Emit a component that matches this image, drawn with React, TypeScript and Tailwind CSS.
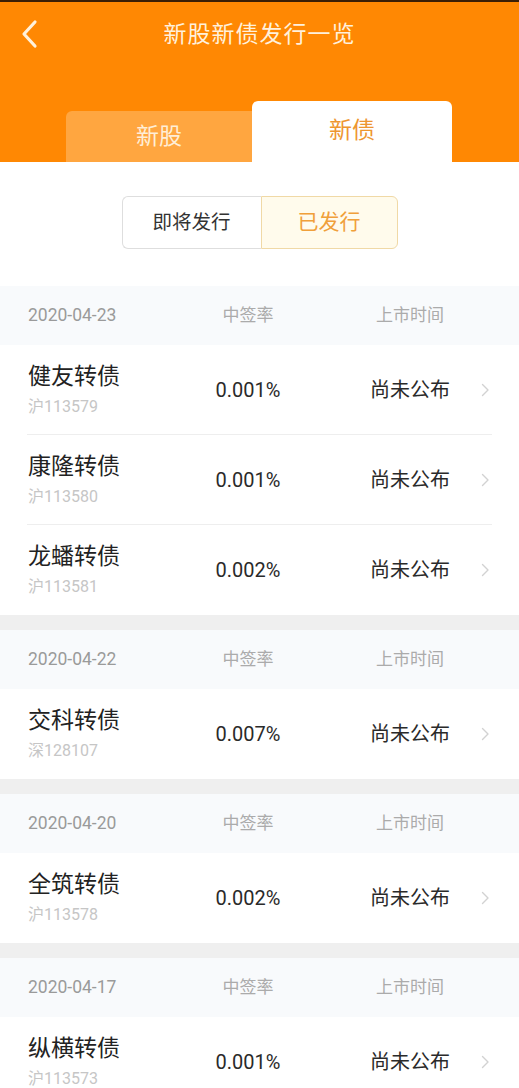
import React from "react";

type Item = { name: string; code: string; rate: string };
type Section = { date: string; items: Item[] };

const sections: Section[] = [
  {
    date: "2020-04-23",
    items: [
      { name: "健友转债", code: "沪113579", rate: "0.001%" },
      { name: "康隆转债", code: "沪113580", rate: "0.001%" },
      { name: "龙蟠转债", code: "沪113581", rate: "0.002%" },
    ],
  },
  { date: "2020-04-22", items: [{ name: "交科转债", code: "深128107", rate: "0.007%" }] },
  { date: "2020-04-20", items: [{ name: "全筑转债", code: "沪113578", rate: "0.002%" }] },
  { date: "2020-04-17", items: [{ name: "纵横转债", code: "沪113573", rate: "0.001%" }] },
];

const font = { fontFamily: '"Roboto", "Noto Sans CJK SC", sans-serif' };

function Chevron() {
  return (
    <svg width="9" height="14" viewBox="0 0 9 14" fill="none">
      <path d="M1.5 1.5L7 7L1.5 12.5" stroke="#D2D2D2" strokeWidth="1.4" strokeLinecap="round" strokeLinejoin="round" />
    </svg>
  );
}

export default function App() {
  return (
    <div className="w-[519px] h-[1088px] overflow-hidden bg-white" style={font}>
      {/* Orange header */}
      <div className="bg-[#FF8803] relative">
        <div className="h-[2px] bg-[#3B1E05]" />
        <div className="h-[66px] flex items-center justify-center relative">
          <svg className="absolute left-[19px] top-[17px]" width="22" height="32" viewBox="0 0 22 32" fill="none">
            <path d="M16 3L5 15L16 27" stroke="#FFF1DC" strokeWidth="3.2" strokeLinecap="round" strokeLinejoin="round" />
          </svg>
          <span className="text-[23px] text-[#FFF1DC] tracking-[1px] leading-none mt-[-2px]">新股新债发行一览</span>
        </div>
        <div className="h-[94px] flex items-end pl-[66px]">
          <div className="w-[186px] h-[51px] bg-[#FFA640] rounded-tl-[6px] flex items-center justify-center">
            <span className="text-[23px] text-[#FFEED6] leading-none">新股</span>
          </div>
          <div className="w-[200px] h-[61px] bg-white rounded-t-[6px] flex items-center justify-center">
            <span className="text-[23px] text-[#EE9630] leading-none mb-[3px]">新债</span>
          </div>
        </div>
      </div>

      {/* Segment control */}
      <div className="flex justify-center pt-[34px] pb-[37px]">
        <div className="flex h-[53px] w-[276px]">
          <div className="w-[139px] border border-[#DEDEDE] border-r-0 rounded-l-[6px] flex items-center justify-center">
            <span className="text-[19.5px] text-[#333333]">即将发行</span>
          </div>
          <div className="w-[137px] border border-[#F0D9A6] bg-[#FFFBEC] rounded-r-[6px] flex items-center justify-center">
            <span className="text-[21px] text-[#F0A03A]">已发行</span>
          </div>
        </div>
      </div>

      {/* List */}
      <div>
        {sections.map((s, si) => (
          <div key={s.date}>
            {si > 0 && <div className="h-[15px] bg-[#EFEFEF]" />}
            <div className="h-[59px] bg-[#F8FAFC] flex items-center px-[28px]">
              <div className="w-[170px] text-[17.5px] text-[#9A9A9A]">{s.date}</div>
              <div className="w-[100px] text-center text-[17px] text-[#ABABAB]">中签率</div>
              <div className="ml-[72px] w-[80px] text-center text-[17px] text-[#ABABAB] whitespace-nowrap">上市时间</div>
            </div>
            <div className="px-[27px]">
              {s.items.map((it, ii) => (
                <div
                  key={it.code}
                  className={`h-[90px] flex items-center ${ii < s.items.length - 1 ? "border-b border-[#EEEEEE]" : ""}`}
                >
                  <div className="w-[171px] pl-[1px] flex flex-col">
                    <span className="text-[23px] leading-[28px] text-[#222222]">{it.name}</span>
                    <span className="text-[16px] leading-[20px] mt-[6px] text-[#C6C6C6]">{it.code}</span>
                  </div>
                  <div className="w-[100px] text-center text-[20px] text-[#2A2A2A]">{it.rate}</div>
                  <div className="ml-[72px] w-[81px] text-[20px] text-[#2A2A2A] whitespace-nowrap">尚未公布</div>
                  <div className="ml-[30px] flex items-center">
                    <Chevron />
                  </div>
                </div>
              ))}
            </div>
          </div>
        ))}
      </div>
    </div>
  );
}
